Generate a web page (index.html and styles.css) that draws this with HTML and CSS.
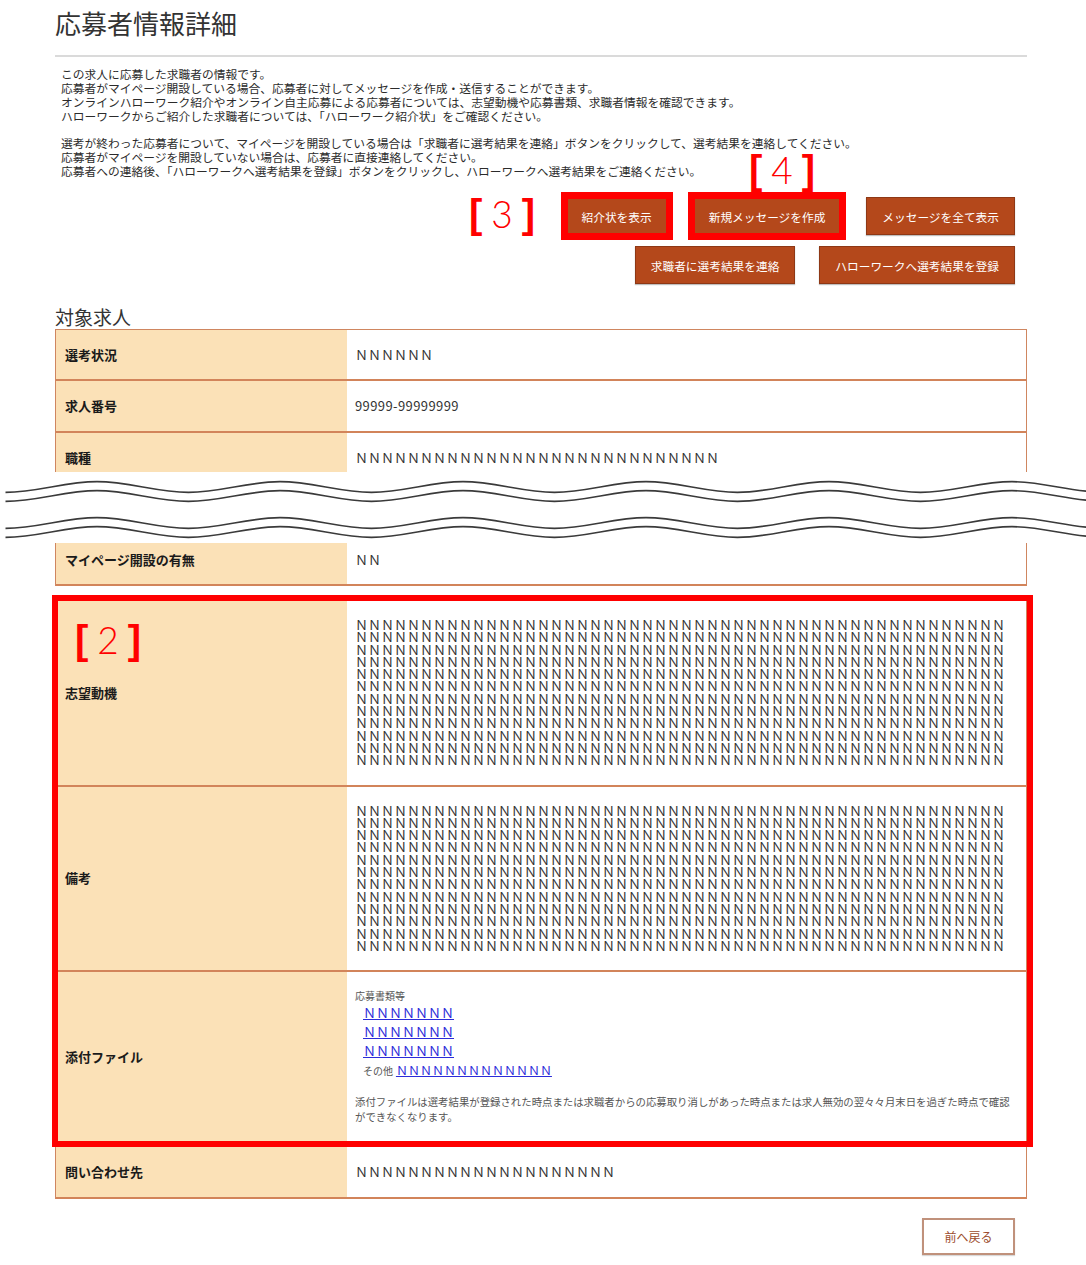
FILE: index.html
```html
<!DOCTYPE html>
<html lang="ja">
<head>
<meta charset="utf-8">
<title>応募者情報詳細</title>
<link rel="stylesheet" href="styles.css">
</head>
<body>
<div class="page">
  <div class="head"><h1>応募者情報詳細</h1></div>

  <div class="intro">
    <p>この求人に応募した求職者の情報です。<br>応募者がマイページ開設している場合、応募者に対してメッセージを作成・送信することができます。<br>オンラインハローワーク紹介やオンライン自主応募による応募者については、志望動機や応募書類、求職者情報を確認できます。<br>ハローワークからご紹介した求職者については、「ハローワーク紹介状」をご確認ください。</p>
    <p>選考が終わった応募者について、マイページを開設している場合は「求職者に選考結果を連絡」ボタンをクリックして、選考結果を連絡してください。<br>応募者がマイページを開設していない場合は、応募者に直接連絡してください。<br>応募者への連絡後、「ハローワークへ選考結果を登録」ボタンをクリックし、ハローワークへ選考結果をご連絡ください。</p>
  </div>

  <div class="actions">
    <div class="btn-row row-1">
      <button class="btn marked">紹介状を表示</button>
      <button class="btn marked">新規メッセージを作成</button>
      <button class="btn">メッセージを全て表示</button>
    </div>
    <div class="btn-row">
      <button class="btn">求職者に選考結果を連絡</button>
      <button class="btn">ハローワークへ選考結果を登録</button>
    </div>
  </div>

  <div class="anno anno-3"><span class="br">[</span><span class="dg">3</span><span class="br">]</span></div>
  <div class="anno anno-4"><span class="br">[</span><span class="dg">4</span><span class="br">]</span></div>

  <h2 class="section-title">対象求人</h2>

  <div class="tbl tbl-a">
    <div class="row r1"><div class="th">選考状況</div><div class="td">ＮＮＮＮＮＮ</div></div>
    <div class="row r2"><div class="th">求人番号</div><div class="td num">99999-99999999</div></div>
    <div class="row r3"><div class="th">職種</div><div class="td">ＮＮＮＮＮＮＮＮＮＮＮＮＮＮＮＮＮＮＮＮＮＮＮＮＮＮＮＮ</div></div>
  </div>

  <svg class="wave" viewBox="0 0 1086 71" width="1086" height="71" aria-hidden="true">
    <defs>
      <path id="wl" d="M5.5,20.3 C38.5,20.3 64,9.7 97,9.7 S155.5,20.3 188.5,20.3 S247,9.7 280,9.7 S338.5,20.3 371.5,20.3 S430,9.7 463,9.7 S521.5,20.3 554.5,20.3 S613,9.7 646,9.7 S704.5,20.3 737.5,20.3 S796,9.7 829,9.7 S887.5,20.3 920.5,20.3 S979,9.7 1012,9.7 S1070.5,20.3 1103.5,20.3"/>
    </defs>
    <g fill="none" stroke="#3a3a3a" stroke-width="1.7">
      <use href="#wl"/>
      <use href="#wl" y="9"/>
      <use href="#wl" y="36"/>
      <use href="#wl" y="45"/>
    </g>
  </svg>

  <div class="tbl tbl-b">
    <div class="row mp"><div class="th">マイページ開設の有無</div><div class="td">ＮＮ</div></div>
  </div>

  <div class="focus">
    <div class="anno anno-2"><span class="br">[</span><span class="dg">2</span><span class="br">]</span></div>
    <div class="tbl tbl-in">
      <div class="row big"><div class="th">志望動機</div><div class="td"><div class="nblock">
        <div class="nl">ＮＮＮＮＮＮＮＮＮＮＮＮＮＮＮＮＮＮＮＮＮＮＮＮＮＮＮＮＮＮＮＮＮＮＮＮＮＮＮＮＮＮＮＮＮＮＮＮＮＮ</div>
        <div class="nl">ＮＮＮＮＮＮＮＮＮＮＮＮＮＮＮＮＮＮＮＮＮＮＮＮＮＮＮＮＮＮＮＮＮＮＮＮＮＮＮＮＮＮＮＮＮＮＮＮＮＮ</div>
        <div class="nl">ＮＮＮＮＮＮＮＮＮＮＮＮＮＮＮＮＮＮＮＮＮＮＮＮＮＮＮＮＮＮＮＮＮＮＮＮＮＮＮＮＮＮＮＮＮＮＮＮＮＮ</div>
        <div class="nl">ＮＮＮＮＮＮＮＮＮＮＮＮＮＮＮＮＮＮＮＮＮＮＮＮＮＮＮＮＮＮＮＮＮＮＮＮＮＮＮＮＮＮＮＮＮＮＮＮＮＮ</div>
        <div class="nl">ＮＮＮＮＮＮＮＮＮＮＮＮＮＮＮＮＮＮＮＮＮＮＮＮＮＮＮＮＮＮＮＮＮＮＮＮＮＮＮＮＮＮＮＮＮＮＮＮＮＮ</div>
        <div class="nl">ＮＮＮＮＮＮＮＮＮＮＮＮＮＮＮＮＮＮＮＮＮＮＮＮＮＮＮＮＮＮＮＮＮＮＮＮＮＮＮＮＮＮＮＮＮＮＮＮＮＮ</div>
        <div class="nl">ＮＮＮＮＮＮＮＮＮＮＮＮＮＮＮＮＮＮＮＮＮＮＮＮＮＮＮＮＮＮＮＮＮＮＮＮＮＮＮＮＮＮＮＮＮＮＮＮＮＮ</div>
        <div class="nl">ＮＮＮＮＮＮＮＮＮＮＮＮＮＮＮＮＮＮＮＮＮＮＮＮＮＮＮＮＮＮＮＮＮＮＮＮＮＮＮＮＮＮＮＮＮＮＮＮＮＮ</div>
        <div class="nl">ＮＮＮＮＮＮＮＮＮＮＮＮＮＮＮＮＮＮＮＮＮＮＮＮＮＮＮＮＮＮＮＮＮＮＮＮＮＮＮＮＮＮＮＮＮＮＮＮＮＮ</div>
        <div class="nl">ＮＮＮＮＮＮＮＮＮＮＮＮＮＮＮＮＮＮＮＮＮＮＮＮＮＮＮＮＮＮＮＮＮＮＮＮＮＮＮＮＮＮＮＮＮＮＮＮＮＮ</div>
        <div class="nl">ＮＮＮＮＮＮＮＮＮＮＮＮＮＮＮＮＮＮＮＮＮＮＮＮＮＮＮＮＮＮＮＮＮＮＮＮＮＮＮＮＮＮＮＮＮＮＮＮＮＮ</div>
        <div class="nl">ＮＮＮＮＮＮＮＮＮＮＮＮＮＮＮＮＮＮＮＮＮＮＮＮＮＮＮＮＮＮＮＮＮＮＮＮＮＮＮＮＮＮＮＮＮＮＮＮＮＮ</div>
      </div></div></div>
      <div class="row big"><div class="th">備考</div><div class="td"><div class="nblock">
        <div class="nl">ＮＮＮＮＮＮＮＮＮＮＮＮＮＮＮＮＮＮＮＮＮＮＮＮＮＮＮＮＮＮＮＮＮＮＮＮＮＮＮＮＮＮＮＮＮＮＮＮＮＮ</div>
        <div class="nl">ＮＮＮＮＮＮＮＮＮＮＮＮＮＮＮＮＮＮＮＮＮＮＮＮＮＮＮＮＮＮＮＮＮＮＮＮＮＮＮＮＮＮＮＮＮＮＮＮＮＮ</div>
        <div class="nl">ＮＮＮＮＮＮＮＮＮＮＮＮＮＮＮＮＮＮＮＮＮＮＮＮＮＮＮＮＮＮＮＮＮＮＮＮＮＮＮＮＮＮＮＮＮＮＮＮＮＮ</div>
        <div class="nl">ＮＮＮＮＮＮＮＮＮＮＮＮＮＮＮＮＮＮＮＮＮＮＮＮＮＮＮＮＮＮＮＮＮＮＮＮＮＮＮＮＮＮＮＮＮＮＮＮＮＮ</div>
        <div class="nl">ＮＮＮＮＮＮＮＮＮＮＮＮＮＮＮＮＮＮＮＮＮＮＮＮＮＮＮＮＮＮＮＮＮＮＮＮＮＮＮＮＮＮＮＮＮＮＮＮＮＮ</div>
        <div class="nl">ＮＮＮＮＮＮＮＮＮＮＮＮＮＮＮＮＮＮＮＮＮＮＮＮＮＮＮＮＮＮＮＮＮＮＮＮＮＮＮＮＮＮＮＮＮＮＮＮＮＮ</div>
        <div class="nl">ＮＮＮＮＮＮＮＮＮＮＮＮＮＮＮＮＮＮＮＮＮＮＮＮＮＮＮＮＮＮＮＮＮＮＮＮＮＮＮＮＮＮＮＮＮＮＮＮＮＮ</div>
        <div class="nl">ＮＮＮＮＮＮＮＮＮＮＮＮＮＮＮＮＮＮＮＮＮＮＮＮＮＮＮＮＮＮＮＮＮＮＮＮＮＮＮＮＮＮＮＮＮＮＮＮＮＮ</div>
        <div class="nl">ＮＮＮＮＮＮＮＮＮＮＮＮＮＮＮＮＮＮＮＮＮＮＮＮＮＮＮＮＮＮＮＮＮＮＮＮＮＮＮＮＮＮＮＮＮＮＮＮＮＮ</div>
        <div class="nl">ＮＮＮＮＮＮＮＮＮＮＮＮＮＮＮＮＮＮＮＮＮＮＮＮＮＮＮＮＮＮＮＮＮＮＮＮＮＮＮＮＮＮＮＮＮＮＮＮＮＮ</div>
        <div class="nl">ＮＮＮＮＮＮＮＮＮＮＮＮＮＮＮＮＮＮＮＮＮＮＮＮＮＮＮＮＮＮＮＮＮＮＮＮＮＮＮＮＮＮＮＮＮＮＮＮＮＮ</div>
        <div class="nl">ＮＮＮＮＮＮＮＮＮＮＮＮＮＮＮＮＮＮＮＮＮＮＮＮＮＮＮＮＮＮＮＮＮＮＮＮＮＮＮＮＮＮＮＮＮＮＮＮＮＮ</div>
      </div></div></div>
      <div class="row att"><div class="th">添付ファイル</div>
        <div class="td files">
          <div class="small">応募書類等</div>
          <div class="link-line"><a href="#">ＮＮＮＮＮＮＮ</a></div>
          <div class="link-line"><a href="#">ＮＮＮＮＮＮＮ</a></div>
          <div class="link-line"><a href="#">ＮＮＮＮＮＮＮ</a></div>
          <div class="link-line"><span class="small">その他</span> <a href="#" class="other">ＮＮＮＮＮＮＮＮＮＮＮＮＮ</a></div>
          <div class="note">添付ファイルは選考結果が登録された時点または求職者からの応募取り消しがあった時点または求人無効の翌々々月末日を過ぎた時点で確認<br>ができなくなります。</div>
        </div>
      </div>
    </div>
  </div>

  <div class="tbl tbl-c">
    <div class="row contact"><div class="th">問い合わせ先</div><div class="td">ＮＮＮＮＮＮＮＮＮＮＮＮＮＮＮＮＮＮＮＮ</div></div>
  </div>

  <div class="back-wrap"><button class="back">前へ戻る</button></div>
</div>
</body>
</html>
```
FILE: styles.css
```css
* { box-sizing: border-box; }

body {
  margin: 0;
  background: #fff;
  color: #333;
  font-family: "Noto Sans CJK JP", "Noto Sans", sans-serif;
}

.page {
  position: relative;
  width: 972px;
  margin-left: 55px;
  padding-bottom: 10px;
}

.head {
  height: 57px;
  padding-top: 8px;
  border-bottom: 2px solid #dadada;
}
.head h1 {
  margin: 0;
  font-size: 26px;
  line-height: 30px;
  font-weight: normal;
  color: #333;
}

.intro {
  margin-top: 10px;
  padding-left: 6px;
  font-size: 11.75px;
  line-height: 14px;
  color: #2b2b2b;
}
.intro p { margin: 0; }
.intro p + p { margin-top: 13px; }

.actions {
  margin-top: 19px;
  display: flex;
  flex-direction: column;
  align-items: flex-end;
  gap: 11px;
  padding-right: 12px;
}
.btn-row { display: flex; gap: 24px; }
.btn-row.row-1 { gap: 25px; }
.btn {
  height: 38px;
  padding: 0 15px;
  background: #b4481b;
  color: #fff;
  font-family: inherit;
  font-size: 11.7px;
  border: 1px solid #8e3815;
  box-shadow: 0 1px 1px rgba(0,0,0,0.25);
  display: flex;
  align-items: center;
}
.btn.marked {
  outline: 7px solid #ff0000;
  outline-offset: -2px;
}

.anno {
  position: absolute;
  display: flex;
  align-items: center;
  gap: 9px;
  color: #ff0000;
  height: 40px;
}
.anno .br {
  font-family: "Liberation Sans", sans-serif;
  font-weight: bold;
  font-size: 40px;
  line-height: 40px;
}
.anno .dg {
  font-family: "Lato", "Liberation Sans", sans-serif;
  font-weight: 300;
  font-size: 37px;
  line-height: 40px;
}
.anno-3 { left: 414px; top: 194px; }
.anno-4 { left: 694px; top: 150px; }
.anno-2 { left: 17px; top: 19px; }

.section-title {
  margin: 22px 0 1px;
  font-size: 19px;
  line-height: 22px;
  font-weight: normal;
  color: #333;
}

.tbl {
  border-left: 1px solid #cf8660;
  border-right: 1px solid #cf8660;
}
.tbl-a { border-top: 1px solid #cf8660; }

.row {
  display: grid;
  grid-template-columns: 291px 1fr;
  border-bottom: 2px solid #d2845a;
}
.th {
  background: #fbe1b7;
  font-weight: bold;
  font-size: 13px;
  line-height: 18px;
  color: #1a1a1a;
  padding-left: 9px;
  display: flex;
  align-items: center;
}
.td {
  padding-left: 8px;
  display: flex;
  align-items: center;
  font-size: 13px;
  line-height: 18px;
  color: #333;
}
.td.num { letter-spacing: 0.4px; }

.r1 { height: 51px; }
.r2 { height: 52px; }
.r3 { height: 39px; border-bottom: none; }
.r3 .th, .r3 .td { align-items: flex-start; padding-top: 16px; }

.wave {
  display: block;
  margin-left: -55px;
  width: 1086px;
  height: 71px;
}

.mp { height: 43px; }
.mp .th, .mp .td { align-items: flex-start; padding-top: 8px; }

.focus {
  position: relative;
  margin: 9px 0 0 -3px;
  width: 981px;
  border: 6px solid #ff0000;
}
.tbl-in { border-left: none; }
.tbl-in .row { grid-template-columns: 289px 1fr; }
.tbl-in .th { padding-left: 7px; }
.big .td { padding: 18px 8px; }
.nblock {
  font-size: 13px;
  color: #333;
}
.nl {
  height: 12.3px;
  line-height: 12.3px;
  white-space: nowrap;
}
.att { border-bottom: none; }
.files {
  display: block;
  padding: 17px 10px 17px 8px;
}
.small {
  font-size: 10px;
  line-height: 14px;
  color: #555;
}
.link-line {
  padding-left: 8px;
  line-height: 19px;
  font-size: 13px;
}
.link-line a { color: #2b2bd9; text-decoration: underline; }
.link-line a.other { font-size: 12px; }
.note {
  margin-top: 15px;
  font-size: 10.4px;
  line-height: 15px;
  color: #555;
  white-space: nowrap;
}

.contact { height: 52px; }

.back-wrap {
  display: flex;
  justify-content: flex-end;
  padding-right: 12px;
  margin-top: 19px;
}
.back {
  width: 93px;
  height: 37px;
  background: #fff;
  border: 2px solid #c0917b;
  color: #9c4c2c;
  font-family: inherit;
  font-size: 12px;
  box-shadow: 0 1px 1px rgba(0,0,0,0.15);
}
```
